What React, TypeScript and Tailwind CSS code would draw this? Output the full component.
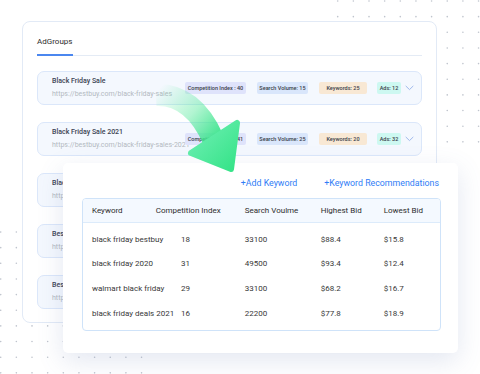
const adGroups = [
  { title: "Black Friday Sale", url: "https://bestbuy.com/black-friday-sales", ci: 40, sv: 15, kw: 25, ads: 12, open: true },
  { title: "Black Friday Sale 2021", url: "https://bestbuy.com/black-friday-sales-2021", ci: 41, sv: 25, kw: 20, ads: 32, open: true },
  { title: "Black Friday Deals", url: "https://bestbuy.com/black-friday-deals", ci: 36, sv: 18, kw: 22, ads: 10, open: false },
  { title: "Bestbuy Weekend Sale", url: "https://bestbuy.com/weekend-sale", ci: 28, sv: 12, kw: 16, ads: 8, open: false },
  { title: "Bestbuy Deals", url: "https://bestbuy.com/deals", ci: 33, sv: 20, kw: 18, ads: 14, open: false },
];

const keywords = [
  { kw: "black friday bestbuy", ci: 18, sv: 33100, hi: "$88.4", lo: "$15.8" },
  { kw: "black friday 2020", ci: 31, sv: 49500, hi: "$93.4", lo: "$12.4" },
  { kw: "walmart black friday", ci: 29, sv: 33100, hi: "$68.2", lo: "$16.7" },
  { kw: "black friday deals 2021", ci: 16, sv: 22200, hi: "$77.8", lo: "$18.9" },
];

function DotGrid({ ox, oy }: { ox: number; oy: number }) {
  const dots = [];
  for (let i = 0; i < 10; i++) {
    for (let j = 0; j < 10; j++) {
      dots.push(<circle key={`${i}-${j}`} cx={ox + i * 15.65} cy={oy + j * 15.65} r={0.8} fill="#bfc4cd" />);
    }
  }
  return <>{dots}</>;
}

function Chevron() {
  return (
    <svg width="9" height="6" viewBox="0 0 9 6" className="ml-auto">
      <path d="M1 1.2 L4.5 4.6 L8 1.2" fill="none" stroke="#9fb9ec" strokeWidth="1" strokeLinecap="round" />
    </svg>
  );
}

function AdGroupRow({ g }: { g: (typeof adGroups)[number] }) {
  return (
    <div className="flex items-center h-[34px] pl-[14px] pr-[7px] rounded-[7px] border border-[#dbe7fa] bg-[#f4f8fe]">
      <div className="flex flex-col gap-[4px] w-[133px]">
        <span className="text-[7px] leading-[9px] font-medium text-[#3c4453] whitespace-nowrap">{g.title}</span>
        <span className="text-[7px] leading-[9px] text-[#b3b8c1] whitespace-nowrap">{g.url}</span>
      </div>
      {g.open && (
        <>
          <div className="flex items-center text-[5.5px] font-medium text-[#3a3f4a]">
            <span className="flex items-center justify-center h-[12px] w-[61px] rounded-[2px] bg-[#dfe3fb] whitespace-nowrap">
              Competition Index : {g.ci}
            </span>
            <span className="flex items-center justify-center h-[12px] w-[51px] ml-[11px] rounded-[2px] bg-[#d9e6fb] whitespace-nowrap">
              Search Volume: {g.sv}
            </span>
            <span className="flex items-center justify-center h-[12px] w-[48px] ml-[11px] rounded-[2px] bg-[#f8e8d4] whitespace-nowrap">
              Keywords: {g.kw}
            </span>
            <span className="flex items-center justify-center h-[12px] w-[24px] ml-[10px] rounded-[2px] bg-[#cdf8f1] whitespace-nowrap">
              Ads: {g.ads}
            </span>
          </div>
          <Chevron />
        </>
      )}
    </div>
  );
}

export default function App() {
  return (
    <div className="relative w-[480px] h-[374px] overflow-hidden bg-white font-['Roboto',sans-serif]">
      <svg className="absolute left-0 top-0" width="480" height="374">
        <DotGrid ox={337.7} oy={1} />
        <DotGrid ox={0.7} oy={232} />
      </svg>

      <div className="relative ml-[22px] mt-[21px] w-[415px] h-[302px] rounded-[8px] border border-[#e2eaf6] bg-white">
        <div className="mx-[14px] pt-[15px]">
          <div className="flex border-b border-[#e4ebf5]">
            <span className="-mb-px pb-[7px] w-[36px] border-b-2 border-[#4b87ef] text-[8px] leading-[10px] text-[#2e2e2e]">
              AdGroups
            </span>
          </div>
          <div className="mt-[15px] flex flex-col gap-[17px]">
            {adGroups.map((g) => (
              <AdGroupRow key={g.title} g={g} />
            ))}
          </div>
        </div>
      </div>

      <div className="absolute left-[63px] top-[163px] w-[395px] h-[190px] rounded-[5px] bg-white shadow-[0_8px_26px_rgba(90,110,170,0.17)]">
        <div className="flex justify-end gap-[27px] pt-[14px] pr-[19px] text-[8.8px] leading-[12px] text-[#2f7df6]">
          <span>+Add Keyword</span>
          <span>+Keyword Recommendations</span>
        </div>
        <div className="mt-[9px] ml-[19px] w-[359px] rounded-[4px] border border-[#cfe3f9] overflow-hidden text-[8px] text-[#383838]">
          <div className="flex items-center h-[24px] pl-[9px] bg-[#f4f9ff] border-b border-[#dcebfb] text-[#2d2d2d]">
            <span className="w-[63.7px]">Keyword</span>
            <span className="w-[89px]">Competition Index</span>
            <span className="w-[76px]">Search Voulme</span>
            <span className="w-[63px]">Highest Bid</span>
            <span className="flex-1">Lowest Bid</span>
          </div>
          <div className="py-[4.5px]">
            {keywords.map((k) => (
              <div key={k.kw} className="flex items-center h-[24.6px] pl-[9px] whitespace-nowrap">
                <span className="w-[89px]">{k.kw}</span>
                <span className="w-[63.7px]">{k.ci}</span>
                <span className="w-[76px]">{k.sv}</span>
                <span className="w-[63px]">{k.hi}</span>
                <span className="flex-1">{k.lo}</span>
              </div>
            ))}
          </div>
        </div>
      </div>

      <svg className="absolute left-0 top-0 pointer-events-none" width="480" height="374">
        <defs>
          <linearGradient id="shaft" gradientUnits="userSpaceOnUse" x1="158" y1="90" x2="214" y2="140">
            <stop offset="0" stopColor="#3de58d" stopOpacity="0" />
            <stop offset="0.55" stopColor="#3de58d" stopOpacity="0.4" />
            <stop offset="1" stopColor="#3de58d" stopOpacity="0.95" />
          </linearGradient>
          <linearGradient id="head" gradientUnits="userSpaceOnUse" x1="195" y1="130" x2="236" y2="170">
            <stop offset="0" stopColor="#6aeeb0" />
            <stop offset="1" stopColor="#34e387" />
          </linearGradient>
        </defs>
        <path d="M156 95 C181 94 200 110 213 139" fill="none" stroke="url(#shaft)" strokeWidth="22" />
        <polygon
          points="191,153 237,123 231,169"
          fill="url(#head)"
          stroke="url(#head)"
          strokeWidth="6"
          strokeLinejoin="round"
        />
      </svg>
    </div>
  );
}
